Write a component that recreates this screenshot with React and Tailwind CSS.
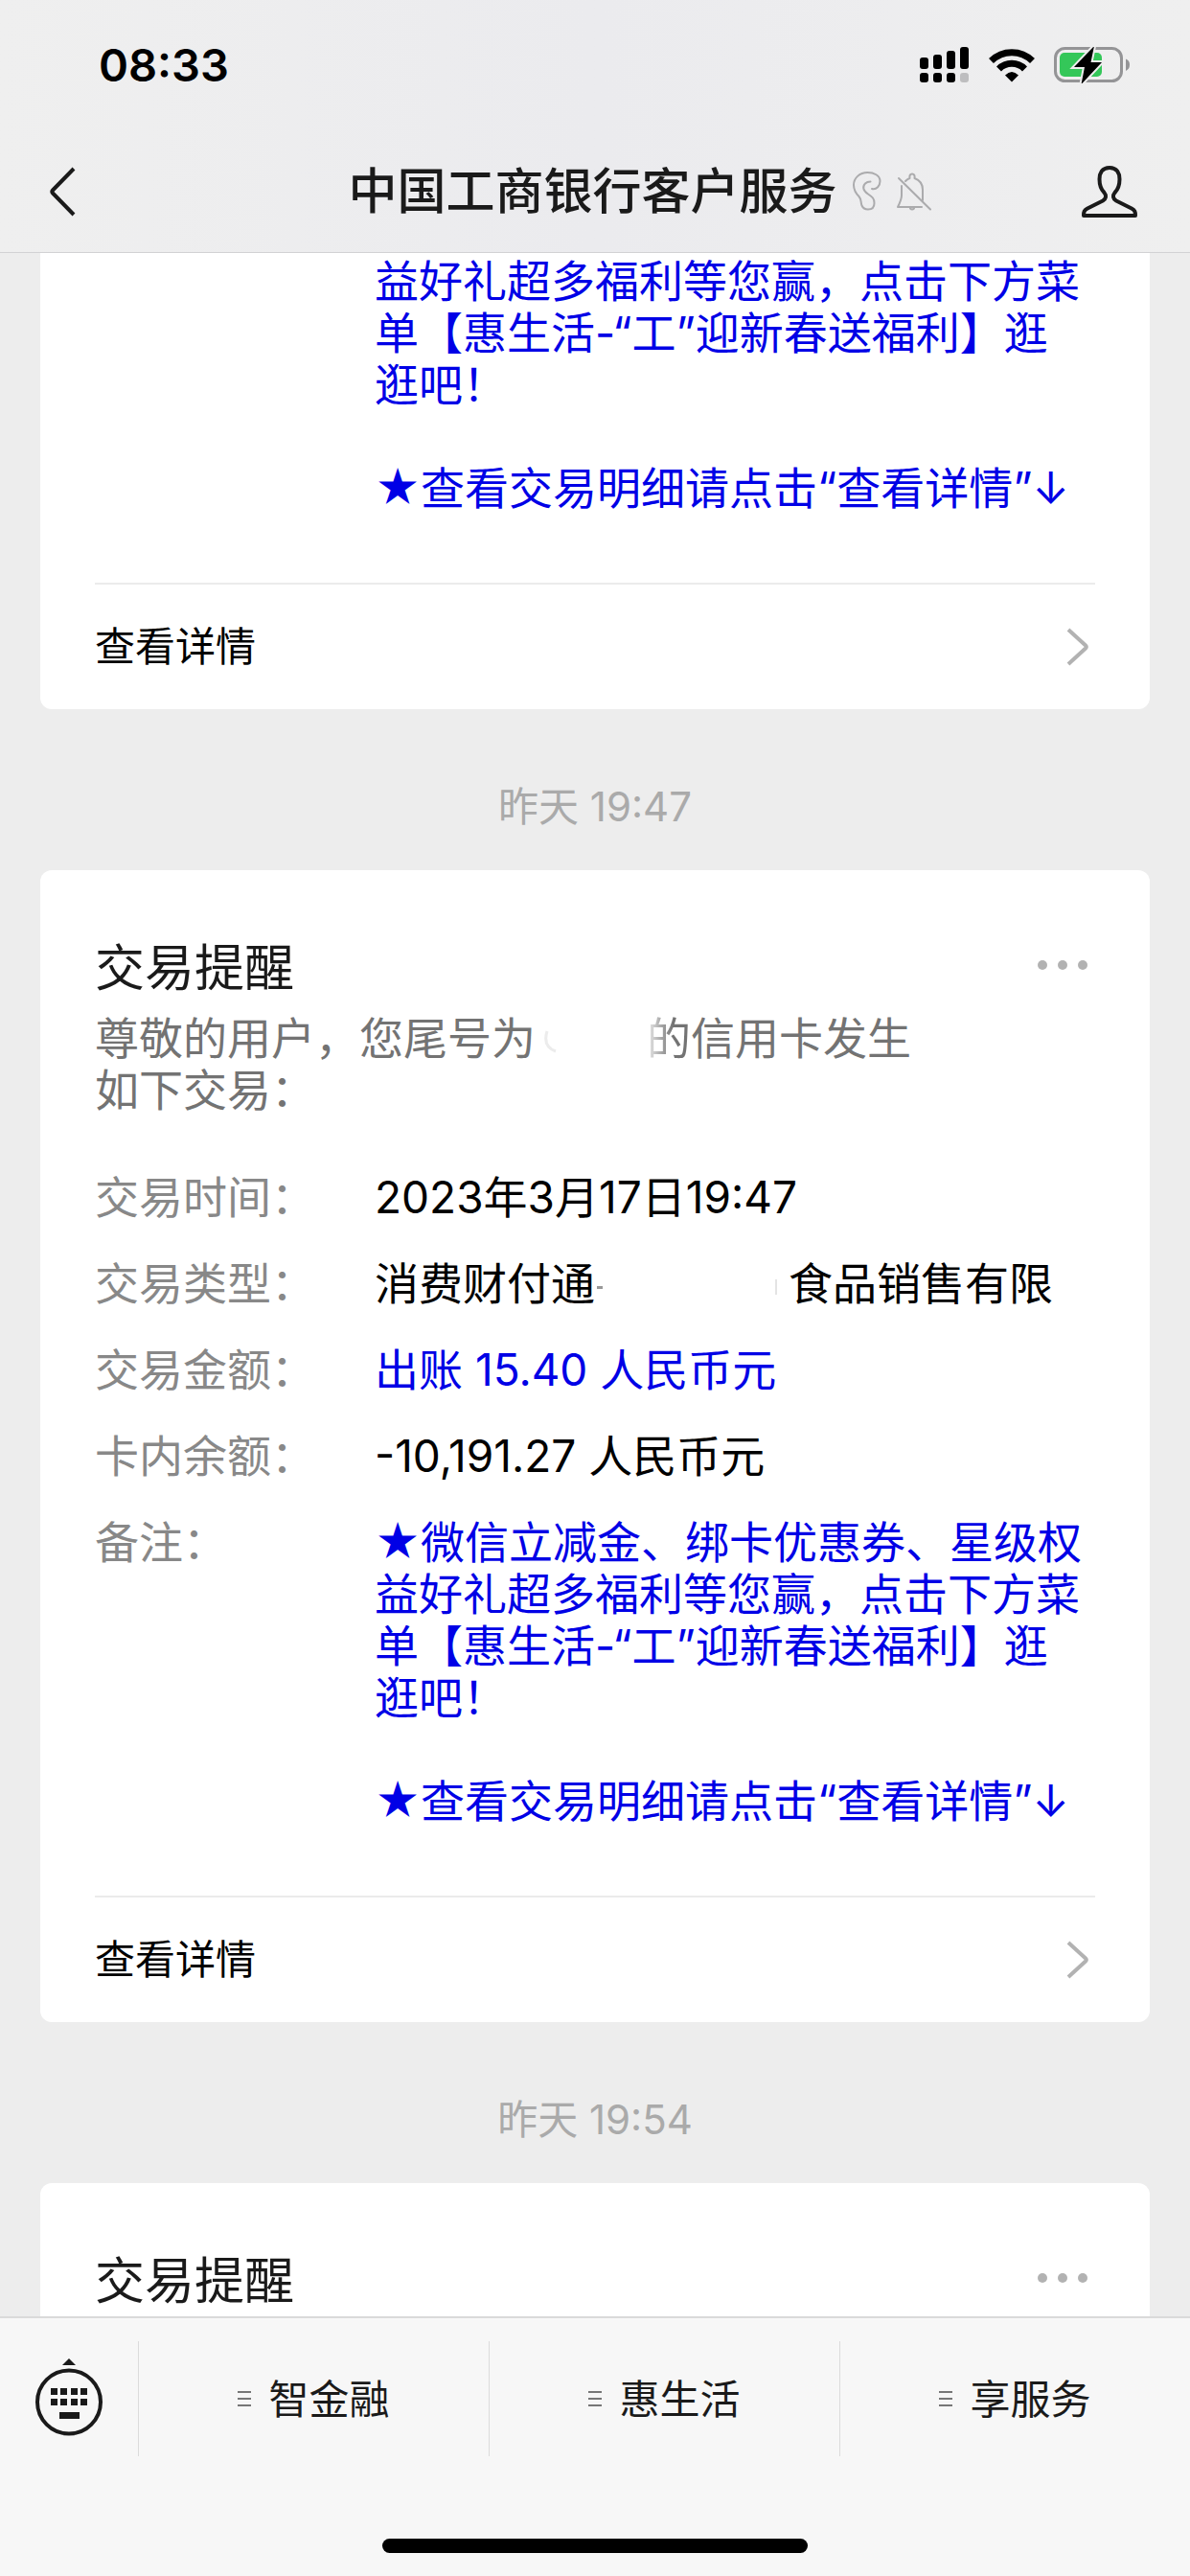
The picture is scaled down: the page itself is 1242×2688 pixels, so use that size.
const FUENTE = "font-['Inter','Noto_Sans_CJK_SC',sans-serif]";

const MENU = ['智金融', '惠生活', '享服务'];

function SignalIcon() {
  return (
    <svg width="52" height="38" viewBox="0 0 52 38" fill="#000">
      <rect x="0" y="11" width="9" height="12" rx="3" />
      <rect x="14" y="8" width="9" height="15" rx="3" />
      <rect x="28" y="4" width="9" height="19" rx="3" />
      <rect x="42" y="0" width="9" height="23" rx="3" />
      <rect x="0" y="27" width="9" height="10" rx="3" />
      <rect x="14" y="27" width="9" height="10" rx="3" />
      <rect x="28" y="27" width="9" height="10" rx="3" />
      <rect x="42" y="27" width="9" height="10" rx="3" fill="#bdbdbf" />
    </svg>
  );
}

function WifiIcon() {
  return (
    <svg width="48" height="36" viewBox="0 0 48 36" fill="none" stroke="#000" strokeWidth="7">
      <path d="M2.500 13.500A30.500 30.500 0 0 1 45.500 13.500" />
      <path d="M10.500 22A19 19 0 0 1 37.500 22" />
      <path d="M24 35.500L17 28.500Q24 21.500 31 28.500Z" fill="#000" stroke="none" />
    </svg>
  );
}

function BatteryIcon() {
  return (
    <svg width="80" height="38" viewBox="0 0 80 38">
      <rect x="1.500" y="1.500" width="69" height="34" rx="10" fill="none" stroke="#949496" strokeWidth="3" />
      <path d="M75 12.500Q79 14 79 18.500T75 25Z" fill="#949496" />
      <rect x="6" y="6" width="44" height="25" rx="5" fill="#34c759" />
      <path d="M42 -1L21 21H32L28.500 39L50 16H38.500Z" fill="#000" stroke="#eee" strokeWidth="4" paintOrder="stroke" />
    </svg>
  );
}

function BackIcon() {
  return (
    <svg width="30" height="52" viewBox="0 0 30 52" fill="none" stroke="#1a1a1a" strokeWidth="4">
      <path d="M27 2L5 24.500Q3.500 26 5 27.500L27 50" />
    </svg>
  );
}

function EarIcon() {
  return (
    <svg width="30" height="41" viewBox="0 0 30 41" fill="none" stroke="#ababad" strokeWidth="2" strokeLinecap="round">
      <path d="M20 18C25 19 28.500 15 28.500 10C28.500 4 22 1 15.500 1C7 1 1 7 1 14C1 20 3.500 23 6.500 26C9.500 29.500 8 32 9.500 35.500C11 39 14 39.500 16 39.500C20 39.500 22.500 37 22.500 33C22.500 28 20.500 26.500 16 23.500C10.500 20 10 15.500 13 12.500C14.500 11 16.500 10.500 18.500 10.500" />
    </svg>
  );
}

function BellOffIcon() {
  return (
    <svg width="37" height="40" viewBox="0 0 37 40" fill="none" stroke="#ababad" strokeWidth="2" strokeLinecap="round" strokeLinejoin="round">
      <path d="M2 6L35 38.500" />
      <path d="M9 9C10.500 7.500 12 6.500 13.500 6C13 3 14 1.500 16 1.500S19 3 18.500 6C24 8 27 12.500 27 18V29" />
      <path d="M5 14V24C5 28 3 32 1 36H26" />
      <path d="M14 37.500Q16 39.500 18 37.500" />
    </svg>
  );
}

function PersonIcon() {
  return (
    <svg width="58" height="54" viewBox="0 0 58 54" fill="none" stroke="#1a1a1a" strokeWidth="4" strokeLinejoin="round">
      <path d="M29 2C21 2 18.500 8 18.500 14C18.500 21 20.500 25 23.500 28C26 31 25.500 34.500 22 36.500L6 44.500C2.500 46.500 2 48 2 52H56C56 48 55.500 46.500 52 44.500L36 36.500C32.500 34.500 32 31 34.500 28C37.500 25 39.500 21 39.500 14C39.500 8 37 2 29 2Z" />
    </svg>
  );
}

function KeyboardIcon() {
  return (
    <svg width="72" height="82" viewBox="0 0 72 82" fill="#1a1a1a">
      <path d="M36 0L43 7H29Z" />
      <circle cx="36" cy="45.500" r="33" fill="none" stroke="#1a1a1a" strokeWidth="4" />
      {[17, 27, 38, 48].map((x) => (
        <g key={x}>
          <rect x={x} y="31" width="7" height="7" />
          <rect x={x} y="42" width="7" height="7" />
        </g>
      ))}
      <rect x="26" y="56" width="21" height="7" />
    </svg>
  );
}

function ListIcon() {
  return (
    <svg width="14" height="17" viewBox="0 0 14 17" fill="#777">
      <rect y="0" width="14" height="2" />
      <rect y="7" width="14" height="2" />
      <rect y="14" width="14" height="2" />
    </svg>
  );
}

function Nota({ inicio }) {
  return (
    <div className="pr-3 text-[#0000e6]">
      <p>{inicio}益好礼超多福利等您赢，点击下方菜单【惠生活-“工”迎新春送福利】逛逛吧！</p>
      <p className="mt-[54px]">★查看交易明细请点击“查看详情”↓</p>
    </div>
  );
}

function VerDetalle() {
  return (
    <a href="#detalle" className="mt-[72px] flex h-[132px] items-center justify-between border-t-2 border-[#ebebeb] text-[42px] text-black">
      查看详情
      <svg className="mr-1.5" width="24" height="40" viewBox="0 0 24 40" fill="none" stroke="#b2b2b2" strokeWidth="4">
        <path d="M2 2L20 18.500Q21.500 20 20 21.500L2 38" />
      </svg>
    </a>
  );
}

function Encabezado() {
  return (
    <div className="flex h-[60px] items-center justify-between">
      <h2 className="text-[52px] leading-[62px] text-[#1a1a1a]">交易提醒</h2>
      <button type="button" aria-label="更多" className="mr-2 flex gap-[11px] pb-2">
        <span className="size-2.5 rounded-full bg-[#b2b2b2]" />
        <span className="size-2.5 rounded-full bg-[#b2b2b2]" />
        <span className="size-2.5 rounded-full bg-[#b2b2b2]" />
      </button>
    </div>
  );
}

function Fila({ label, children }) {
  return (
    <div className="flex">
      <dt className="w-[292px] shrink-0 text-[#888]">{label}</dt>
      <dd className="min-w-0 flex-1 text-black">{children}</dd>
    </div>
  );
}

function Hora({ children }) {
  return <p className="pt-[76px] pb-[40px] text-center text-[42px] leading-[52px] text-[#aaa]">{children}</p>;
}

export default function App() {
  return (
    <div className={`flex h-screen flex-col overflow-hidden bg-[#ededed] ${FUENTE}`}>
      <header className="shrink-0 border-b border-[#d2d2d4] bg-linear-to-r from-[#efefef] via-[#ebebee] to-[#efefef]">
        <div className="flex h-[136px] items-center justify-between pr-[62px] pl-[103px]">
          <span className="text-[47px] font-semibold text-black">08:33</span>
          <div className="flex items-center gap-5">
            <SignalIcon />
            <WifiIcon />
            <BatteryIcon />
          </div>
        </div>
        <div className="grid h-[127px] grid-cols-[1fr_auto_1fr] items-center pr-[55px] pl-[50px]">
          <button type="button" aria-label="返回" className="justify-self-start">
            <BackIcon />
          </button>
          <h1 className="text-[51px] leading-[60px] font-medium text-[#1a1a1a]">中国工商银行客户服务</h1>
          <div className="flex items-center justify-between pl-4">
            <span className="flex items-center gap-4">
              <EarIcon />
              <BellOffIcon />
            </span>
            <button type="button" aria-label="个人资料">
              <PersonIcon />
            </button>
          </div>
        </div>
      </header>

      <main className="min-h-0 flex-1 overflow-hidden px-[42px] text-[46px] leading-[54px]">
        <article className="rounded-b-xl bg-white px-[57px] pt-0.5">
          <div className="pl-[292px]">
            <Nota />
          </div>
          <VerDetalle />
        </article>

        <Hora>昨天 19:47</Hora>

        <article className="rounded-xl bg-white px-[57px] pt-[73px]">
          <Encabezado />
          <p className="mt-[15px] text-[#737373]">
            尊敬的用户，您尾号为
            <span className="inline-block w-[116px]">
              <svg className="ml-2" width="20" height="40" viewBox="0 0 20 40" fill="none" stroke="#ececec" strokeWidth="3">
                <path d="M4 16Q-1 32 13 37" />
              </svg>
            </span>
            <span className="bg-linear-to-r from-[#eee] to-[#737373] to-60% bg-clip-text text-transparent">的</span>
            信用卡发生
            <br />
            如下交易：
          </p>
          <dl className="mt-[58px] flex flex-col gap-9">
            <Fila label="交易时间：">2023年3月17日19:47</Fila>
            <Fila label="交易类型：">
              消费财付通
              <span className="inline-flex w-[202px] items-center justify-between pr-3 pl-0.5 align-middle">
                <span className="h-[3px] w-1.5 bg-[#999]" />
                <span className="h-4 w-0.5 bg-[#e4e4e4]" />
              </span>
              食品销售有限
            </Fila>
            <Fila label="交易金额：">
              <span className="text-[#0000e6]">出账 15.40 人民币元</span>
            </Fila>
            <Fila label="卡内余额：">-10,191.27 人民币元</Fila>
            <Fila label="备注：">
              <Nota inicio="★微信立减金、绑卡优惠券、星级权" />
            </Fila>
          </dl>
          <VerDetalle />
        </article>

        <Hora>昨天 19:54</Hora>

        <article className="rounded-xl bg-white px-[57px] pt-[73px] pb-20">
          <Encabezado />
        </article>
      </main>

      <footer className="shrink-0 border-t-2 border-[#dadada] bg-[#f7f7f7]">
        <nav className="flex h-[168px] items-center">
          <button type="button" aria-label="键盘" className="flex w-[144px] shrink-0 justify-center pb-0.5">
            <KeyboardIcon />
          </button>
          {MENU.map((item) => (
            <button key={item} type="button" className="flex h-[120px] flex-1 items-center justify-center gap-[18px] border-l border-[#dcdcdc] text-[42px] text-[#1a1a1a]">
              <ListIcon />
              {item}
            </button>
          ))}
        </nav>
        <div className="flex h-[101px] items-end justify-center pb-6">
          <div className="h-[15px] w-[444px] rounded-full bg-black" />
        </div>
      </footer>
    </div>
  );
}
